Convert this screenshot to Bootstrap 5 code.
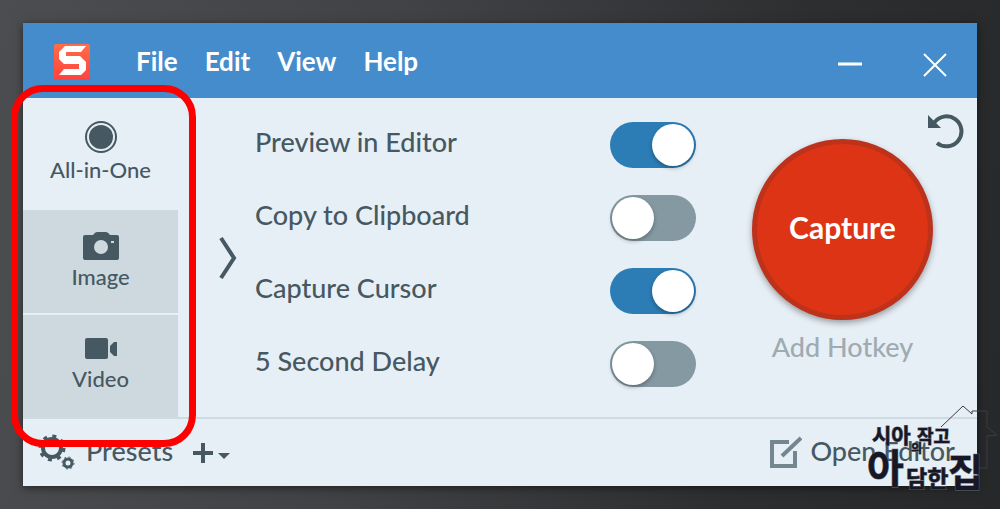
<!DOCTYPE html>
<html lang="en">
<head>
<meta charset="utf-8">
<meta name="viewport" content="width=device-width, initial-scale=1">
<title>Snagit Capture</title>
<link href="https://cdn.jsdelivr.net/npm/bootstrap@5.3.0/dist/css/bootstrap.min.css" rel="stylesheet">
<style>
  :root { --ink: #465861; --pane: #e7eff6; --tile: #ced9df; --bar: #458ccc; }
  body {
    font-family: Lato, "Noto Sans CJK KR", sans-serif;
    font-size: 27px; line-height: 32px; color: var(--ink); font-weight: 500;
    background: linear-gradient(100deg, #4c4d50 0%, #414245 38%, #2d2e30 75%, #272829 100%);
    min-height: 100vh; padding: 23px;
  }
  svg { display: block; }
  .app-window { background: var(--pane); box-shadow: 0 2px 8px rgba(0,0,0,.5); }
  .title-bar { background: var(--bar); min-height: 75px; padding: 0 30px; }
  .title-bar a, .title-bar button { color: #fff; }
  .menu-links { gap: 27px; margin-left: 45px; font-weight: 700; font-size: 26px; }
  .plain-btn { background: none; border: 0; padding: 0; color: inherit; font-weight: inherit; }
  .win-buttons { gap: 61px; padding-top: 8px; }
  .main-pane { min-height: 319px; }
  .mode-bar { width: 155px; gap: 2px; font-size: 22px; line-height: 26px; }
  .mode-btn { flex: 1 1 0; background: var(--tile); gap: 4px; padding-bottom: 2px; }
  .mode-btn.selected { background: transparent; flex-grow: 1.08; }
  .mark-frame { inset: -13px -18px -30px -12px; border: 7px solid #f00; border-radius: 32px; pointer-events: none; z-index: 2; }
  .expander { width: 77px; padding-right: 26px; padding-left: 48px; }
  .options { padding: 10px 0; }
  .option-row { min-height: 73px; }
  .option-row label { padding-bottom: 6px; }
  .toggle {
    appearance: none; width: 86px; height: 46px; margin: 0; border-radius: 23px;
    background: #8599a3; padding: 2px; display: flex; align-items: center; flex: none; cursor: pointer;
  }
  .toggle::before { content: ""; width: 42px; height: 42px; border-radius: 50%; background: #fff; box-shadow: 0 2px 4px rgba(0,0,0,.3); }
  .toggle:checked { background: #2c7db5; justify-content: flex-end; }
  .capture-col { width: 281px; padding-left: 12px; }
  .capture-btn {
    width: 181px; height: 181px; margin-top: 41px; padding: 0 0 5px; border-radius: 50%; border: 5px solid #bd321b;
    background: #dd3415; color: #fff; font-weight: 700; font-size: 30px; box-shadow: 0 3px 6px rgba(0,0,0,.35);
  }
  .hotkey { color: #9eabb1; margin-top: 11px; }
  .undo { top: 13px; right: 12px; }
  .foot-bar { border-top: 2px solid #cfdbe2; min-height: 69px; padding: 0 22px 0 15px; }
  .foot-bar .foot-text { padding-bottom: 4px; }
  .add-preset { margin-left: 20px; }
  .stamp { width: 134px; height: 94px; right: -23px; bottom: -11px; pointer-events: none; z-index: 3; }
  .stamp text { font-family: "Noto Sans CJK KR", sans-serif; fill: #171725; stroke: #62666e; stroke-width: 1px; paint-order: stroke; font-weight: 700; }
</style>
</head>
<body>
<main class="app-window position-relative">
  <header class="title-bar d-flex align-items-center">
    <svg width="38" height="38" viewBox="0 0 38 38" aria-label="Snagit" role="img">
      <defs><linearGradient id="lg" x1="0" y1="0" x2="0" y2="1"><stop offset="0" stop-color="#ff6d47"/><stop offset="1" stop-color="#ff423f"/></linearGradient></defs>
      <rect x="1" y="2" width="36" height="36" rx="2" fill="url(#lg)"/>
      <path fill="#fff" d="M12 4H33L28 10H13V14H27L33 20V28L28 33H6L11 27H26V22H11L6 17V10Z"/>
    </svg>
    <nav class="menu-links d-flex">
      <a class="text-decoration-none" href="#">File</a>
      <a class="text-decoration-none" href="#">Edit</a>
      <a class="text-decoration-none" href="#">View</a>
      <a class="text-decoration-none" href="#">Help</a>
    </nav>
    <div class="win-buttons d-flex align-items-center ms-auto">
      <button class="plain-btn" aria-label="Minimize"><svg width="24" height="24" stroke="#fff" stroke-width="3"><path d="M0 11H24"/></svg></button>
      <button class="plain-btn" aria-label="Close"><svg width="24" height="24" stroke="#fff" stroke-width="2"><path d="M1 1L23 23M23 1L1 23"/></svg></button>
    </div>
  </header>

  <section class="main-pane d-flex position-relative">
    <div class="mode-bar d-flex flex-column position-relative flex-shrink-0">
      <button class="plain-btn mode-btn selected d-flex flex-column align-items-center justify-content-center">
        <svg width="32" height="32"><circle cx="16" cy="16" r="15" fill="none" stroke="#465861" stroke-width="2"/><circle cx="16" cy="16" r="12" fill="#465861"/></svg>
        All-in-One
      </button>
      <button class="plain-btn mode-btn d-flex flex-column align-items-center justify-content-center">
        <svg width="36" height="28" viewBox="0 0 36 28"><path fill="#465861" fill-rule="evenodd" d="M2 3H10Q12 0 14 0H23Q25 0 27 3H34Q36 3 36 5V26Q36 28 34 28H2Q0 28 0 26V5Q0 3 2 3ZM18 8A7 7 0 1 0 18 22A7 7 0 1 0 18 8ZM28 9V11H31V9Z"/></svg>
        Image
      </button>
      <button class="plain-btn mode-btn d-flex flex-column align-items-center justify-content-center">
        <svg width="32" height="24" viewBox="0 0 32 24"><rect width="23" height="21" rx="2" fill="#465861"/><path fill="#465861" d="M25 8L29 4H32V18H29L25 14Z"/></svg>
        Video
      </button>
      <div class="mark-frame position-absolute"></div>
    </div>
    <div class="expander d-flex align-items-center justify-content-center flex-shrink-0">
      <button class="plain-btn" aria-label="Expand"><svg width="20" height="44" fill="none" stroke="#465861" stroke-width="4"><path d="M3 2L16 22L3 42"/></svg></button>
    </div>
    <div class="options flex-grow-1">
      <div class="option-row d-flex align-items-center justify-content-between"><label for="o1">Preview in Editor</label><input class="toggle" type="checkbox" role="switch" id="o1" checked></div>
      <div class="option-row d-flex align-items-center justify-content-between"><label for="o2">Copy to Clipboard</label><input class="toggle" type="checkbox" role="switch" id="o2"></div>
      <div class="option-row d-flex align-items-center justify-content-between"><label for="o3">Capture Cursor</label><input class="toggle" type="checkbox" role="switch" id="o3" checked></div>
      <div class="option-row d-flex align-items-center justify-content-between"><label for="o4">5 Second Delay</label><input class="toggle" type="checkbox" role="switch" id="o4"></div>
    </div>
    <div class="capture-col d-flex flex-column align-items-center flex-shrink-0">
      <button class="capture-btn">Capture</button>
      <button class="plain-btn hotkey">Add Hotkey</button>
    </div>
    <button class="plain-btn undo position-absolute" aria-label="Reset"><svg width="38" height="38" viewBox="0 0 38 38"><path d="M7 12A15 15 0 1 1 10 32" fill="none" stroke="#465861" stroke-width="4"/><path fill="#465861" d="M1 4L14 17H1Z"/></svg></button>
  </section>

  <footer class="foot-bar d-flex align-items-center">
    <button class="plain-btn d-flex align-items-center gap-2">
      <svg width="40" height="38" viewBox="0 0 40 38" fill="none" stroke="#465861">
        <circle cx="14" cy="14" r="9" stroke-width="4"/><circle cx="14" cy="14" r="12" stroke-width="3" stroke-dasharray="4 5.420"/>
        <circle cx="30" cy="29" r="4" stroke-width="3"/><circle cx="30" cy="29" r="6" stroke-width="1" stroke-dasharray="2 2.700"/>
      </svg>
      <span class="foot-text">Presets</span>
    </button>
    <button class="plain-btn add-preset" aria-label="Add preset"><svg width="38" height="22" viewBox="0 0 38 22"><path d="M0 11H20M10 1V21" stroke="#465861" stroke-width="4"/><path fill="#465861" d="M25 11H37L31 17Z"/></svg></button>
    <button class="plain-btn ms-auto d-flex align-items-center gap-2">
      <svg width="34" height="36" viewBox="0 0 34 36" fill="none" stroke="#74868f"><path d="M21 7H4V31H27V16" stroke-width="4"/><path d="M14 21L33 3" stroke-width="4"/></svg>
      <span class="foot-text">Open Editor</span>
    </button>
  </footer>

  <svg class="stamp position-absolute" viewBox="866 403 134 94">
    <path d="M941 427L963 406L972 414V411H987V427L997 435L987 436V468H977" fill="none" stroke="#3b3d45" stroke-width="1"/>
    <text x="872" y="443" font-size="21">시아</text>
    <text x="917" y="443" font-size="18">작고</text>
    <text x="911" y="453" font-size="12">의</text>
    <text x="867" y="483" font-size="40">아</text>
    <text x="906" y="487" font-size="23">담한</text>
    <text x="948" y="486" font-size="38">집</text>
  </svg>
</main>
<script src="https://cdn.jsdelivr.net/npm/bootstrap@5.3.0/dist/js/bootstrap.bundle.min.js"></script>
</body>
</html>
